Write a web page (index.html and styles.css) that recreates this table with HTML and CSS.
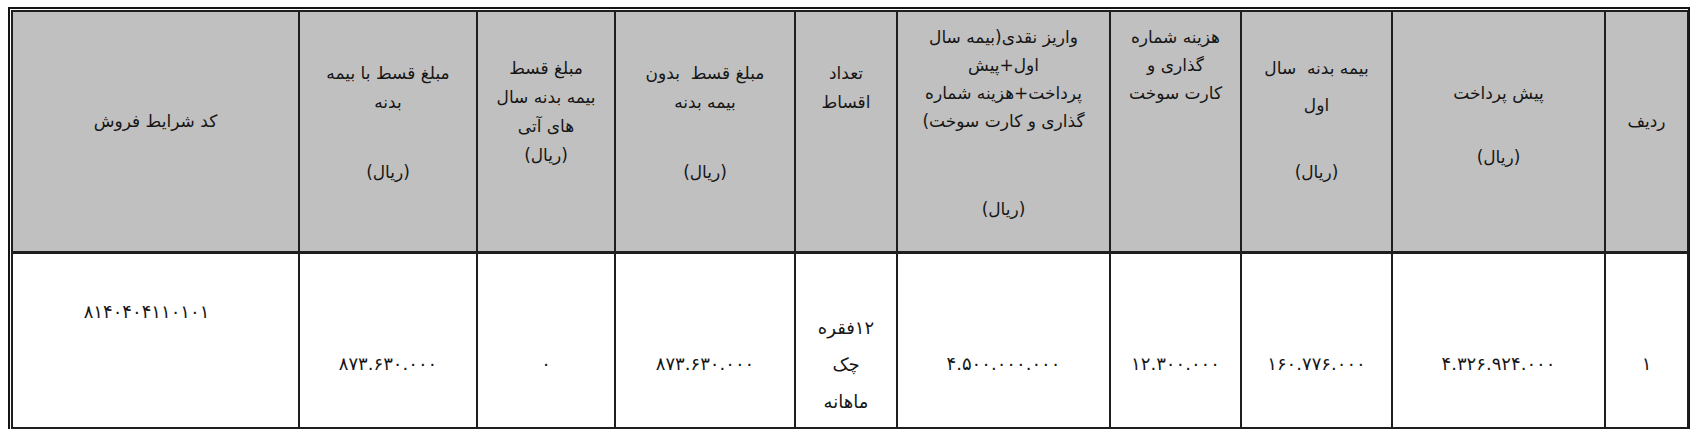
FILE: index.html
```html
<!DOCTYPE html>
<html lang="fa">
<head>
<meta charset="utf-8">
<title>شرایط فروش</title>
<link rel="stylesheet" href="styles.css">
</head>
<body>
<div class="frame">
<table class="sale">
  <colgroup>
    <col class="c-row"><col class="c-pre"><col class="c-ins"><col class="c-plate"><col class="c-cash">
    <col class="c-count"><col class="c-without"><col class="c-future"><col class="c-with"><col class="c-code">
  </colgroup>
  <thead>
    <tr>
      <th class="p95"><div class="l">ردیف</div></th>
      <th class="p67"><div class="l">پیش پرداخت</div><div class="gap35"></div><div class="l">(ریال)</div></th>
      <th class="p42"><div class="l">بیمه بدنه &nbsp;سال</div><div class="l push8">اول</div><div class="gap38"></div><div class="l">(ریال)</div></th>
      <th class="p11 tight"><div class="l">هزینه شماره</div><div class="l">گذاری و</div><div class="l">کارت سوخت</div></th>
      <th class="p11 tight"><div class="l">واریز نقدی(بیمه سال</div><div class="l">اول+پیش</div><div class="l">پرداخت+هزینه شماره</div><div class="l">گذاری و کارت سوخت)</div><div class="gap60"></div><div class="l">(ریال)</div></th>
      <th class="p47"><div class="l">تعداد</div><div class="l">اقساط</div></th>
      <th class="p47"><div class="l">مبلغ قسط &nbsp;بدون</div><div class="l">بیمه بدنه</div><div class="gap41"></div><div class="l">(ریال)</div></th>
      <th class="p42"><div class="l">مبلغ قسط</div><div class="l">بیمه بدنه سال</div><div class="l">های آتی</div><div class="l">(ریال)</div></th>
      <th class="p47"><div class="l">مبلغ قسط با بیمه</div><div class="l">بدنه</div><div class="gap41"></div><div class="l">(ریال)</div></th>
      <th class="p95"><div class="l">کد شرایط فروش</div></th>
    </tr>
  </thead>
  <tbody>
    <tr>
      <td class="b-mid"><div class="n">۱</div></td>
      <td class="b-mid"><div class="n">۴.۳۲۶.۹۲۴.۰۰۰</div></td>
      <td class="b-mid"><div class="n">۱۶۰.۷۷۶.۰۰۰</div></td>
      <td class="b-mid"><div class="n">۱۲.۳۰۰.۰۰۰</div></td>
      <td class="b-mid"><div class="n">۴.۵۰۰.۰۰۰.۰۰۰</div></td>
      <td class="b-three"><div class="n">۱۲فقره</div><div class="n">چک</div><div class="n">ماهانه</div></td>
      <td class="b-mid"><div class="n">۸۷۳.۶۳۰.۰۰۰</div></td>
      <td class="b-mid"><div class="n">۰</div></td>
      <td class="b-mid"><div class="n">۸۷۳.۶۳۰.۰۰۰</div></td>
      <td class="b-top b-code"><div class="n code">۸۱۴۰۴۰۴۱۱۰۱۰۱</div></td>
    </tr>
  </tbody>
</table>
</div>
</body>
</html>
```

FILE: styles.css
```css
html, body {
  background: #ffffff;
}

body {
  margin: 7px 0 0 8px;
  font-family: "DejaVu Sans", "Noto Sans", sans-serif;
  color: #161616;
}

.frame {
  width: 1682px;
  box-sizing: border-box;
  border: 2px solid #141414;
  border-bottom: 0;
  padding: 1px 1px 0 1px;
}

.sale {
  width: 100%;
  border-collapse: collapse;
  table-layout: fixed;
  direction: rtl;
}

.c-row { width: 83px; }
.c-pre { width: 213px; }
.c-ins { width: 151px; }
.c-plate { width: 131px; }
.c-cash { width: 213px; }
.c-count { width: 102px; }
.c-without { width: 180px; }
.c-future { width: 138px; }
.c-with { width: 178px; }
.c-code { width: 287px; }

.sale th,
.sale td {
  border: 2px solid #1e1e1e;
  text-align: center;
  vertical-align: top;
  padding: 0 4px;
  box-sizing: border-box;
}

.sale th {
  background: #c0c0c0;
  font-weight: normal;
  font-size: 17px;
  height: 241px;
}

.sale thead tr th {
  border-bottom-width: 3px;
}

.sale td {
  height: 176px;
  font-size: 17px;
}

.l {
  line-height: 29px;
  white-space: nowrap;
}

.tight .l {
  line-height: 28px;
}

.push8 {
  margin-top: 8px;
}

.n {
  line-height: 37px;
  white-space: nowrap;
  font-size: 18px;
}

.code {
  letter-spacing: 1px;
}

.gap35 { height: 35px; }
.gap38 { height: 38px; }
.gap41 { height: 41px; }
.gap60 { height: 60px; }

.p11 { padding-top: 11px !important; }
.p42 { padding-top: 42px !important; }
.p47 { padding-top: 47px !important; }
.p67 { padding-top: 67px !important; }
.p95 { padding-top: 95px !important; }

.b-top { padding-top: 39px !important; }
.b-mid { padding-top: 91px !important; }
.b-three { padding-top: 55px !important; }
.b-code { padding-right: 22px !important; }
```
